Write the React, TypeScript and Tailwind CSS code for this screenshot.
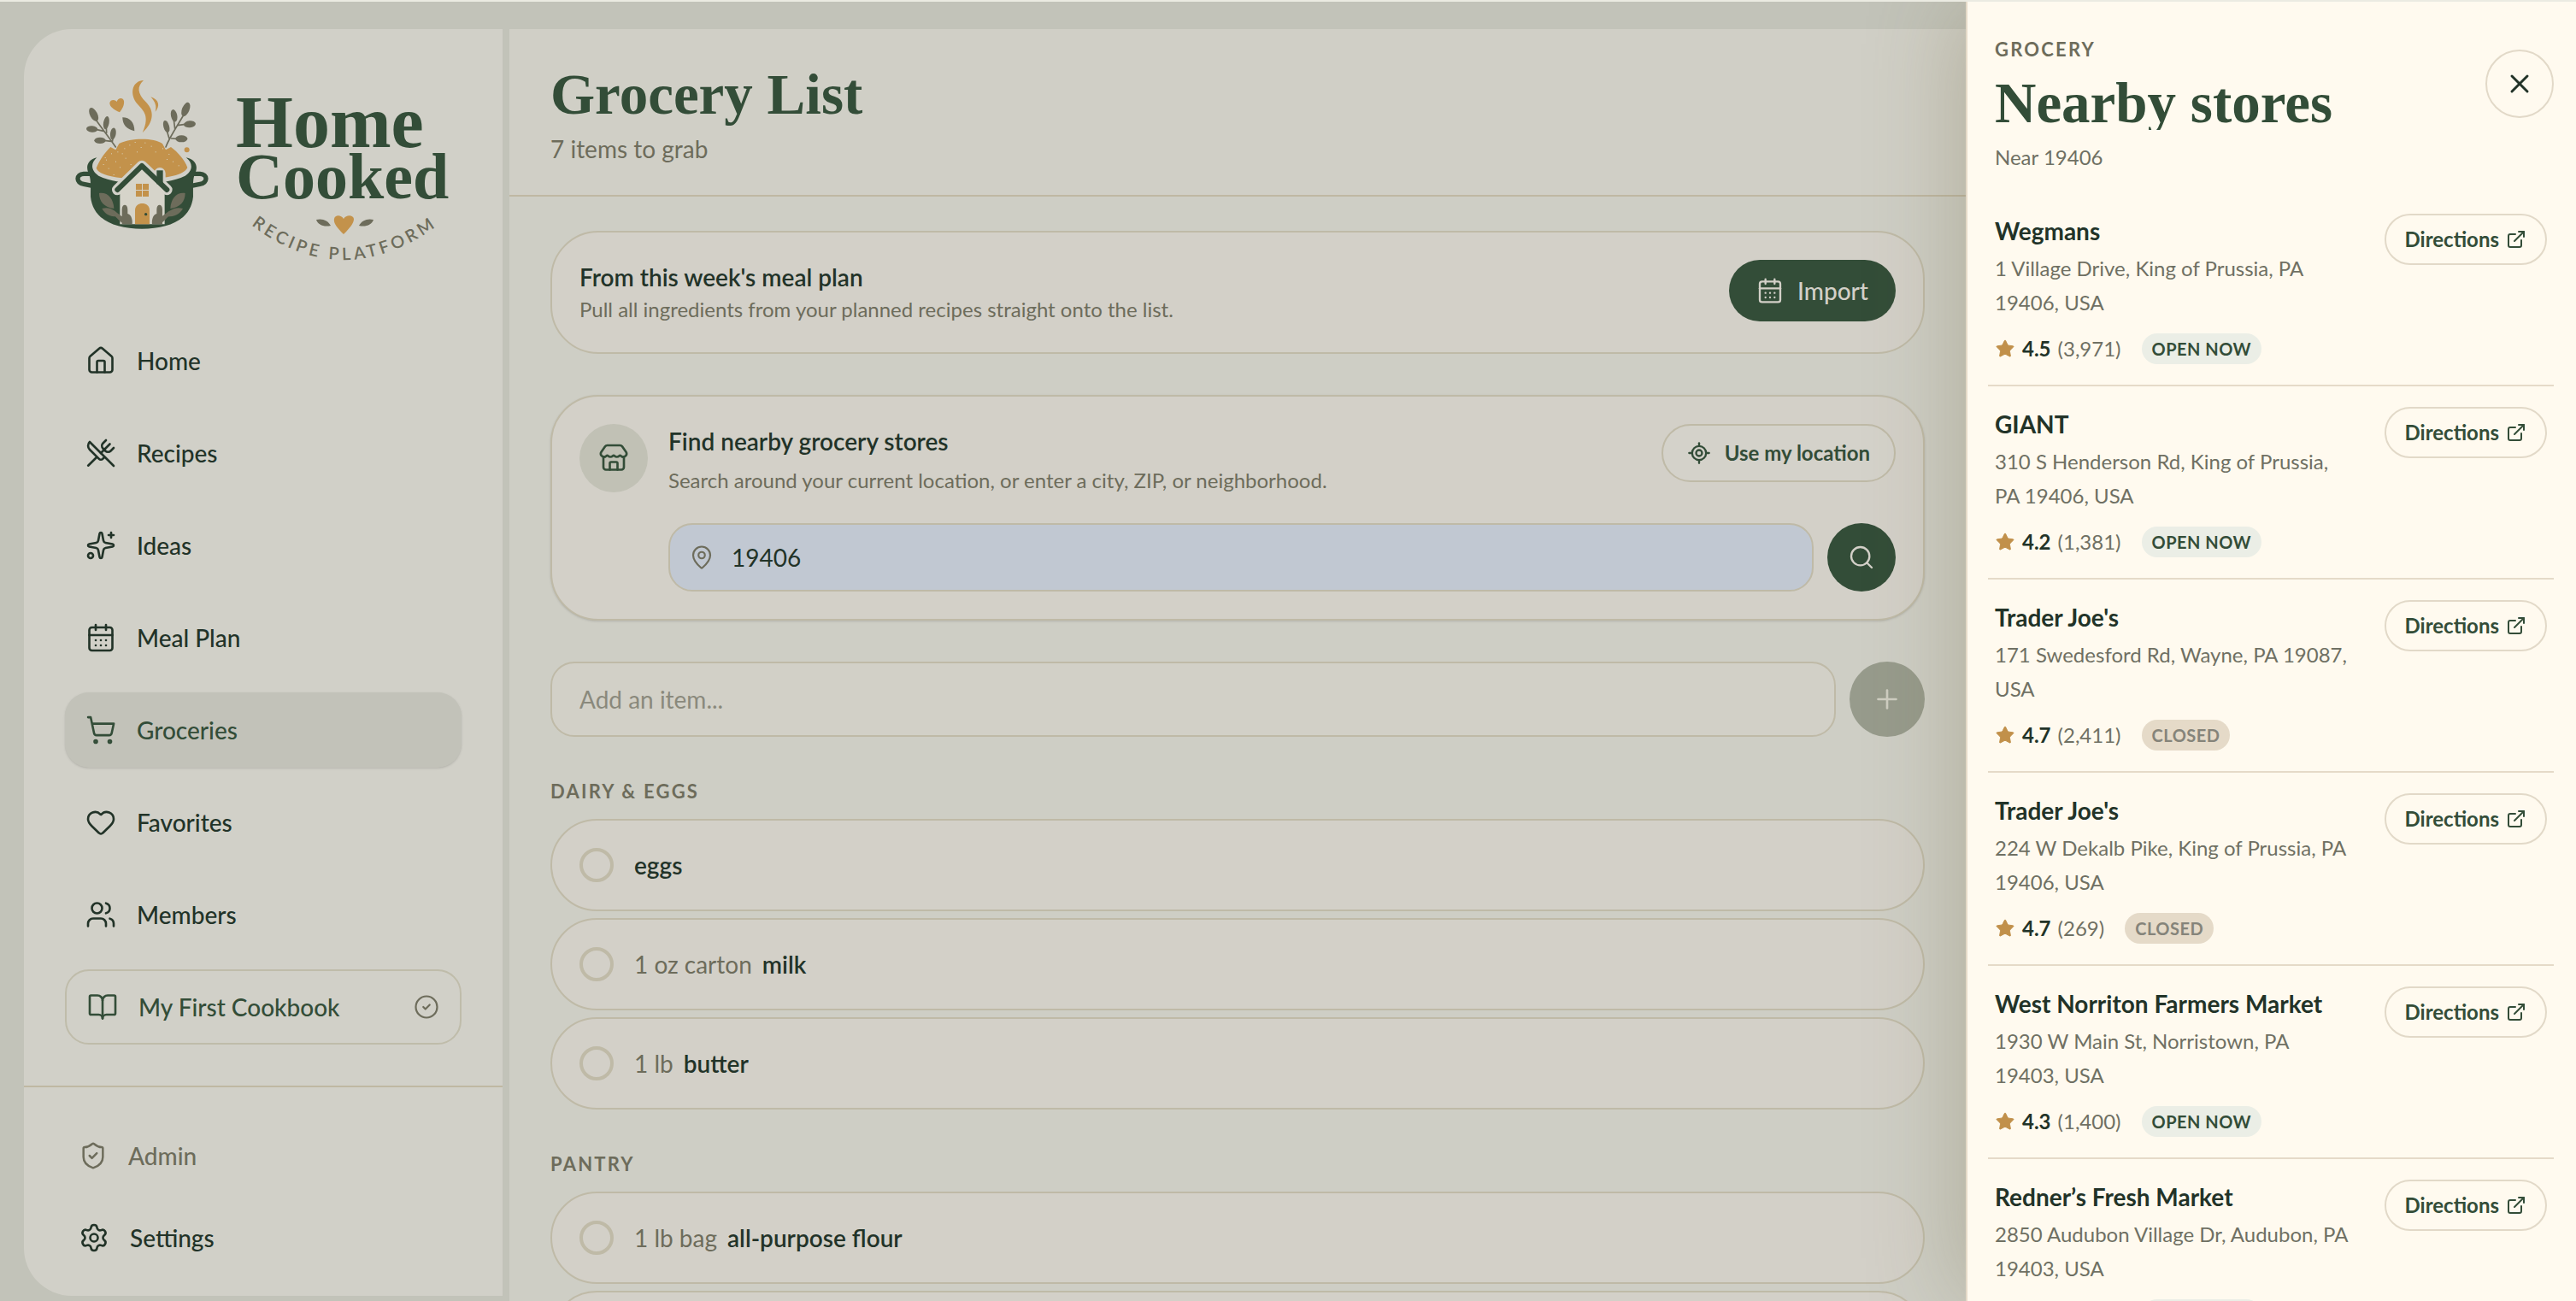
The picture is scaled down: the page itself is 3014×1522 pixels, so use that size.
import {
  BookOpen,
  CalendarDays,
  CircleCheck,
  ExternalLink,
  Heart,
  House,
  LocateFixed,
  MapPin,
  Plus,
  Search,
  Settings,
  ShieldCheck,
  ShoppingCart,
  Sparkles,
  Star,
  Store,
  Users,
  UtensilsCrossed,
  X,
} from "lucide-react";
import type { LucideIcon } from "lucide-react";

interface NavItem {
  label: string;
  icon: LucideIcon;
  active?: boolean;
}

interface GroceryItem {
  name: string;
  amount?: string;
}

interface GroceryStore {
  name: string;
  address: string;
  rating: string;
  reviews: string;
  open: boolean;
}

const navItems: NavItem[] = [
  { label: "Home", icon: House },
  { label: "Recipes", icon: UtensilsCrossed },
  { label: "Ideas", icon: Sparkles },
  { label: "Meal Plan", icon: CalendarDays },
  { label: "Groceries", icon: ShoppingCart, active: true },
  { label: "Favorites", icon: Heart },
  { label: "Members", icon: Users },
];

const sections: { title: string; items: GroceryItem[] }[] = [
  {
    title: "Dairy & Eggs",
    items: [
      { name: "eggs" },
      { amount: "1 oz carton", name: "milk" },
      { amount: "1 lb", name: "butter" },
    ],
  },
  {
    title: "Pantry",
    items: [{ amount: "1 lb bag", name: "all-purpose flour" }, { name: "" }],
  },
];

const stores: GroceryStore[] = [
  {
    name: "Wegmans",
    address: "1 Village Drive, King of Prussia, PA 19406, USA",
    rating: "4.5",
    reviews: "3,971",
    open: true,
  },
  {
    name: "GIANT",
    address: "310 S Henderson Rd, King of Prussia, PA 19406, USA",
    rating: "4.2",
    reviews: "1,381",
    open: true,
  },
  {
    name: "Trader Joe's",
    address: "171 Swedesford Rd, Wayne, PA 19087, USA",
    rating: "4.7",
    reviews: "2,411",
    open: false,
  },
  {
    name: "Trader Joe's",
    address: "224 W Dekalb Pike, King of Prussia, PA 19406, USA",
    rating: "4.7",
    reviews: "269",
    open: false,
  },
  {
    name: "West Norriton Farmers Market",
    address: "1930 W Main St, Norristown, PA 19403, USA",
    rating: "4.3",
    reviews: "1,400",
    open: true,
  },
  {
    name: "Redner’s Fresh Market",
    address: "2850 Audubon Village Dr, Audubon, PA 19403, USA",
    rating: "4.3",
    reviews: "1,120",
    open: true,
  },
];

// [cx, cy, rx, ry, rotation]
const sprigLeaves = [
  [89, 132, 13, 26, -27],
  [133, 161, 10, 23, 10],
  [83, 183, 20, 11, 5],
  [157, 199, 10, 21, 8],
  [111, 223, 20, 11, 0],
  [412, 114, 13, 26, 22],
  [371, 136, 11, 22, -12],
  [426, 166, 21, 12, -5],
  [344, 174, 10, 22, -16],
  [397, 217, 21, 12, 0],
];

const crumbs = [
  [128, 282], [150, 268], [172, 262], [196, 250], [214, 238], [233, 228], [268, 230],
  [290, 242], [305, 262], [330, 250], [352, 270], [122, 306], [140, 320], [165, 296],
  [180, 316], [200, 284], [158, 342], [132, 290], [240, 262], [218, 306], [188, 268],
  [254, 246], [366, 296], [345, 288], [386, 310],
];

function Logo() {
  return (
    <svg viewBox="0 0 464 236" className="block w-full" role="img" aria-label="Home Cooked recipe platform">
      <g transform="translate(4 8) scale(0.3333)">
        <g fill="none" stroke="#334d38" strokeWidth="16">
          <path d="M78 340H54C26 342 26 372 54 376L84 382" />
          <path d="M438 340H462C490 342 490 372 462 376L432 382" />
        </g>
        <path
          fill="#334d38"
          d="M100 283C70 290 60 312 70 336C80 356 78 380 78 420C86 500 160 533 258 533C356 533 430 500 438 420C438 380 436 356 446 336C456 312 446 290 413 283C440 304 436 330 410 347C370 367 320 372 258 372C196 372 146 367 106 347C80 330 76 304 100 283Z"
        />
        <path
          fill="#c3924b"
          d="M98 320C110 290 128 266 148 246L166 256L178 234C220 213 300 213 330 234L342 256L360 246C385 265 408 290 418 318C405 345 350 357 258 357C166 357 108 345 98 320Z"
        />
        <g fill="#d8d2bd">
          {crumbs.map(([x, y]) => (
            <rect key={`${x}-${y}`} x={x} y={y} width="3" height="3" />
          ))}
        </g>
        <g fill="none" stroke="#6d6c5b" strokeWidth="5" strokeLinecap="round">
          <path d="M166 246C146 216 120 184 98 152M134 196L133 176M124 190L96 184M154 228L157 212M150 226L126 223" />
          <path d="M342 246C354 214 376 182 402 138M374 182L370 150M384 170L410 166M354 216L346 190M362 216L380 217" />
        </g>
        <g fill="#6d6c5b">
          {sprigLeaves.map(([cx, cy, rx, ry, r]) => (
            <ellipse key={`${cx}-${cy}`} cx={cx} cy={cy} rx={rx} ry={ry} transform={`rotate(${r} ${cx} ${cy})`} />
          ))}
          <path d="M190 142C216 142 232 160 232 190C204 184 190 168 190 142Z" />
        </g>
        <g fill="#c3924b">
          <path d="M264 12C226 14 214 54 238 90C258 116 290 130 260 196C302 158 302 118 272 88C242 58 240 34 264 12Z" />
          <path d="M289 70C320 80 322 104 305 122C310 104 306 88 289 70Z" />
          <path d="M180 124C160 116 144 104 145 91C147 78 164 78 170 87C174 72 192 71 195 84C197 98 190 112 180 124Z" />
          <circle cx="416" cy="256" r="9" />
        </g>
        {/* house */}
        <g fill="none" stroke="#d1d0c8" strokeLinecap="round" strokeLinejoin="round">
          <path strokeWidth="38" d="M172 396L258 312L346 396" />
          <path strokeWidth="40" d="M321 338V366" />
        </g>
        <path fill="#d6d4ca" d="M181 396L258 318L338 396V517H181Z" />
        <path fill="none" stroke="#334d38" strokeWidth="18" strokeLinecap="round" strokeLinejoin="round" d="M172 396L258 312L346 396" />
        <rect x="310" y="328" width="22" height="48" fill="#334d38" />
        <g fill="#c3924b">
          <rect x="237" y="375" width="21" height="21" />
          <rect x="261" y="375" width="21" height="21" />
          <rect x="237" y="399" width="21" height="21" />
          <rect x="261" y="399" width="21" height="21" />
          <path d="M234 517V468C234 436 285 436 285 468V517Z" />
        </g>
        <circle cx="272" cy="482" r="5" fill="#334d38" />
        <g fill="#6d6c5b">
          <path d="M108 408C140 404 158 428 160 462C126 458 108 438 108 408Z" />
          <path d="M118 462C146 454 166 468 178 490C150 492 130 484 118 462Z" />
          <path d="M410 408C378 404 360 428 358 462C392 458 410 438 410 408Z" />
          <path d="M402 462C374 454 352 468 340 490C368 492 390 484 402 462Z" />
          <path d="M162 470L224 517H196C180 508 166 494 154 470ZM188 510V466C188 444 208 444 208 466V480C220 482 226 500 224 517H188Z" />
          <path d="M354 470L292 517H320C336 508 350 494 362 470ZM330 510V466C330 444 310 444 310 466V480C298 482 292 500 294 517H330Z" />
        </g>
      </g>
      <g fill="#334d38" fontFamily="'Liberation Serif', serif" fontWeight="700">
        <text x="200" y="90" fontSize="86">Home</text>
        <text x="200" y="150" fontSize="76">Cooked</text>
      </g>
      <path fill="#c3924b" d="M326 192C318 184 314 179 315 174C316 169 323 169 326 174C329 169 337 169 338 174C338 179 334 184 326 192Z" />
      <path fill="#6d6c5b" d="M294 175C301 173 308 176 311 182C303 184 296 181 294 175ZM361 175C354 173 347 176 344 182C352 184 359 181 361 175Z" />
      <path id="tagline-arc" fill="none" d="M218 181Q326 264 440 179" />
      <text fill="#6d6c5b" fontFamily="Lato, sans-serif" fontSize="20" fontWeight="600" letterSpacing="4">
        <textPath href="#tagline-arc">RECIPE PLATFORM</textPath>
      </text>
    </svg>
  );
}

function Sidebar() {
  return (
    <aside className="mb-[6px] ml-7 mr-2 mt-8 flex w-[560px] shrink-0 flex-col rounded-l-[56px] bg-[#d1d0c8]">
      <div className="px-12 pt-12">
        <Logo />
      </div>
      <nav className="mt-[60px] flex flex-col gap-5 px-12">
        {navItems.map(({ label, icon: Icon, active }) => (
          <a
            key={label}
            href="#"
            className={
              active
                ? "flex h-[88px] items-center gap-6 rounded-[28px] bg-[#c2c2b9] px-6 text-[#334d38] shadow-sm"
                : "flex h-[88px] items-center gap-6 rounded-[28px] px-6"
            }
          >
            <Icon size={36} strokeWidth={1.75} />
            {label}
          </a>
        ))}
        <a
          href="#"
          className="flex h-[88px] items-center gap-6 rounded-[28px] border-2 border-[#bfbcaa] px-6 text-[#334d38]"
        >
          <BookOpen size={36} strokeWidth={1.75} />
          <span className="flex-1">My First Cookbook</span>
          <CircleCheck size={30} strokeWidth={1.75} className="text-[#6d6c5b]" />
        </a>
      </nav>
      <div className="mt-12 flex flex-1 flex-col gap-4 border-t-2 border-[#bfb8a3] px-16 pt-10">
        <a href="#" className="flex h-20 items-center gap-6 text-[#6d6c5b]">
          <ShieldCheck size={34} strokeWidth={1.75} />
          Admin
        </a>
        <a href="#" className="flex h-20 items-center gap-6">
          <Settings size={36} strokeWidth={1.75} />
          Settings
        </a>
      </div>
    </aside>
  );
}

function GroceryRow({ name, amount }: GroceryItem) {
  return (
    <li>
      <label className="flex h-[108px] items-center gap-6 rounded-full border-2 border-[#bfbaa7] bg-[#d3d0c8] px-8">
        <input type="checkbox" className="size-10 appearance-none rounded-full border-4 border-[#bfbaa7]" />
        <span className="flex gap-3">
          {amount && <span className="font-normal text-[#6d6c5b]">{amount}</span>}
          <span className="font-semibold">{name}</span>
        </span>
      </label>
    </li>
  );
}

function GroceryMain() {
  return (
    <main className="mt-8 flex min-w-0 flex-1 flex-col bg-[#cecec5]">
      <header className="border-b-2 border-[#bfb8a3] bg-[#d0cfc6] px-12 pb-[34px] pt-9">
        <h1 className="font-[Liberation_Serif,serif] text-[67px] font-bold leading-[80px] text-[#334d38]">
          Grocery List
        </h1>
        <p className="mt-1 font-normal leading-10 text-[#6d6c5b]">7 items to grab</p>
      </header>
      <div className="flex flex-col gap-12 px-12 pt-10">
        <section className="flex items-start justify-between rounded-[56px] border-2 border-[#bfbaa7] bg-[#d3d0c8] p-8">
          <div>
            <h2 className="font-semibold leading-10">From this week's meal plan</h2>
            <p className="text-2xl font-normal leading-9 text-[#6d6c5b]">
              Pull all ingredients from your planned recipes straight onto the list.
            </p>
          </div>
          <button className="flex h-[72px] items-center gap-4 rounded-full bg-[#334d38] px-8 text-[#d3d0c8]">
            <CalendarDays size={32} strokeWidth={1.75} />
            Import
          </button>
        </section>

        <section className="flex gap-6 rounded-[56px] border-2 border-[#bfbaa7] bg-[#d3d0c8] p-8 shadow-sm">
          <div className="flex size-20 shrink-0 items-center justify-center rounded-full bg-[#c1c1b5] text-[#334d38]">
            <Store size={36} strokeWidth={1.75} />
          </div>
          <div className="flex min-w-0 flex-1 flex-col gap-8">
            <div className="flex items-start justify-between">
              <div>
                <h2 className="font-semibold leading-10">Find nearby grocery stores</h2>
                <p className="mt-2 text-2xl font-normal leading-9 text-[#6d6c5b]">
                  Search around your current location, or enter a city, ZIP, or neighborhood.
                </p>
              </div>
              <button className="flex h-[68px] items-center gap-4 rounded-full border-2 border-[#bfbaa7] bg-[#d4d2ca] px-7 text-2xl font-bold text-[#334d38]">
                <LocateFixed size={28} strokeWidth={2} />
                Use my location
              </button>
            </div>
            <form className="flex gap-4">
              <div className="flex h-20 flex-1 items-center gap-5 rounded-[28px] border-2 border-[#bfbaa7] bg-[#c1c8d2] px-[22px]">
                <MapPin size={30} strokeWidth={1.75} className="text-[#6d6c5b]" />
                <input
                  type="text"
                  aria-label="City, ZIP, or neighborhood"
                  defaultValue="19406"
                  className="min-w-0 flex-1 bg-transparent font-normal outline-none"
                />
              </div>
              <button
                type="button"
                aria-label="Search"
                className="flex size-20 items-center justify-center rounded-full bg-[#334d38] text-[#d3d0c8]"
              >
                <Search size={32} strokeWidth={1.75} />
              </button>
            </form>
          </div>
        </section>

        <form className="flex gap-4">
          <input
            type="text"
            aria-label="Add an item"
            placeholder="Add an item..."
            className="h-[88px] min-w-0 flex-1 rounded-[28px] border-2 border-[#bfbaa7] bg-[#d2d0c7] px-8 font-normal outline-none placeholder:text-[#8a897c]"
          />
          <button
            type="button"
            aria-label="Add"
            className="flex size-[88px] items-center justify-center rounded-full bg-[#979b8c] text-[#cfcec2]"
          >
            <Plus size={36} strokeWidth={1.75} />
          </button>
        </form>

        {sections.map((section) => (
          <section key={section.title}>
            <h3 className="text-[22px] font-bold uppercase leading-8 tracking-widest text-[#6d6c5b]">
              {section.title}
            </h3>
            <ul className="mt-4 flex flex-col gap-2">
              {section.items.map((item) => (
                <GroceryRow key={item.name} {...item} />
              ))}
            </ul>
          </section>
        ))}
      </div>
    </main>
  );
}

function StoreCard({ name, address, rating, reviews, open }: GroceryStore) {
  return (
    <li className="flex items-start justify-between gap-10 border-b-2 border-[#e5dac8] px-2 py-6">
      <div className="min-w-0 flex-1">
        <h3 className="whitespace-nowrap font-bold leading-10">{name}</h3>
        <p className="mt-1 text-2xl font-normal leading-10 text-[#6f7063]">{address}</p>
        <div className="mt-4 flex h-9 items-center text-2xl">
          <Star size={24} className="mr-2 fill-[#c1904a] text-[#c1904a]" strokeWidth={1} />
          <span className="font-bold">{rating}</span>
          <span className="ml-2 font-normal text-[#6f7063]">({reviews})</span>
          <span
            className={
              open
                ? "ml-6 rounded-full bg-[#ebeee6] px-3 text-xl font-bold leading-9 tracking-wide text-[#334d38]"
                : "ml-6 rounded-full bg-[#e5dac8] px-3 text-xl font-bold leading-9 tracking-wide text-[#85847a]"
            }
          >
            {open ? "OPEN NOW" : "CLOSED"}
          </span>
        </div>
      </div>
      <a
        href="#"
        className="flex h-[60px] shrink-0 items-center gap-2 rounded-full border-2 border-[#e2d9c8] px-[22px] text-2xl font-bold text-[#334d38]"
      >
        Directions
        <ExternalLink size={24} strokeWidth={2} />
      </a>
    </li>
  );
}

function StoresPanel() {
  return (
    <aside className="relative flex w-[714px] shrink-0 flex-col border-l-2 border-[#e5dac8] bg-[#fffaef] shadow-[-8px_0_100px_rgba(110,100,60,0.3)]">
      <header className="flex items-start justify-between pb-[22px] pl-8 pr-[26px] pt-10">
        <div>
          <p className="text-[22px] font-bold leading-8 tracking-widest text-[#6d6c5b]">GROCERY</p>
          <h2 className="mt-[10px] h-[68px] overflow-hidden font-[Liberation_Serif,serif] text-[67px] font-bold leading-[72px] text-[#334d38]">
            Nearby stores
          </h2>
          <p className="mt-3 text-2xl font-normal leading-10 text-[#6f7063]">Near 19406</p>
        </div>
        <button
          aria-label="Close"
          className="mt-4 flex size-20 items-center justify-center rounded-full border-2 border-[#e2d9c8]"
        >
          <X size={36} strokeWidth={2} />
        </button>
      </header>
      <ul className="min-h-0 flex-1 overflow-hidden pl-6 pr-[26px]">
        {stores.map((store) => (
          <StoreCard key={store.address} {...store} />
        ))}
      </ul>
    </aside>
  );
}

export default function App() {
  return (
    <div className="flex h-screen overflow-hidden border-t-2 border-[#ebebe2] bg-[#c2c3b9] font-[Lato,sans-serif] text-[28px] font-medium text-[#223328]">
      <Sidebar />
      <GroceryMain />
      <StoresPanel />
    </div>
  );
}
